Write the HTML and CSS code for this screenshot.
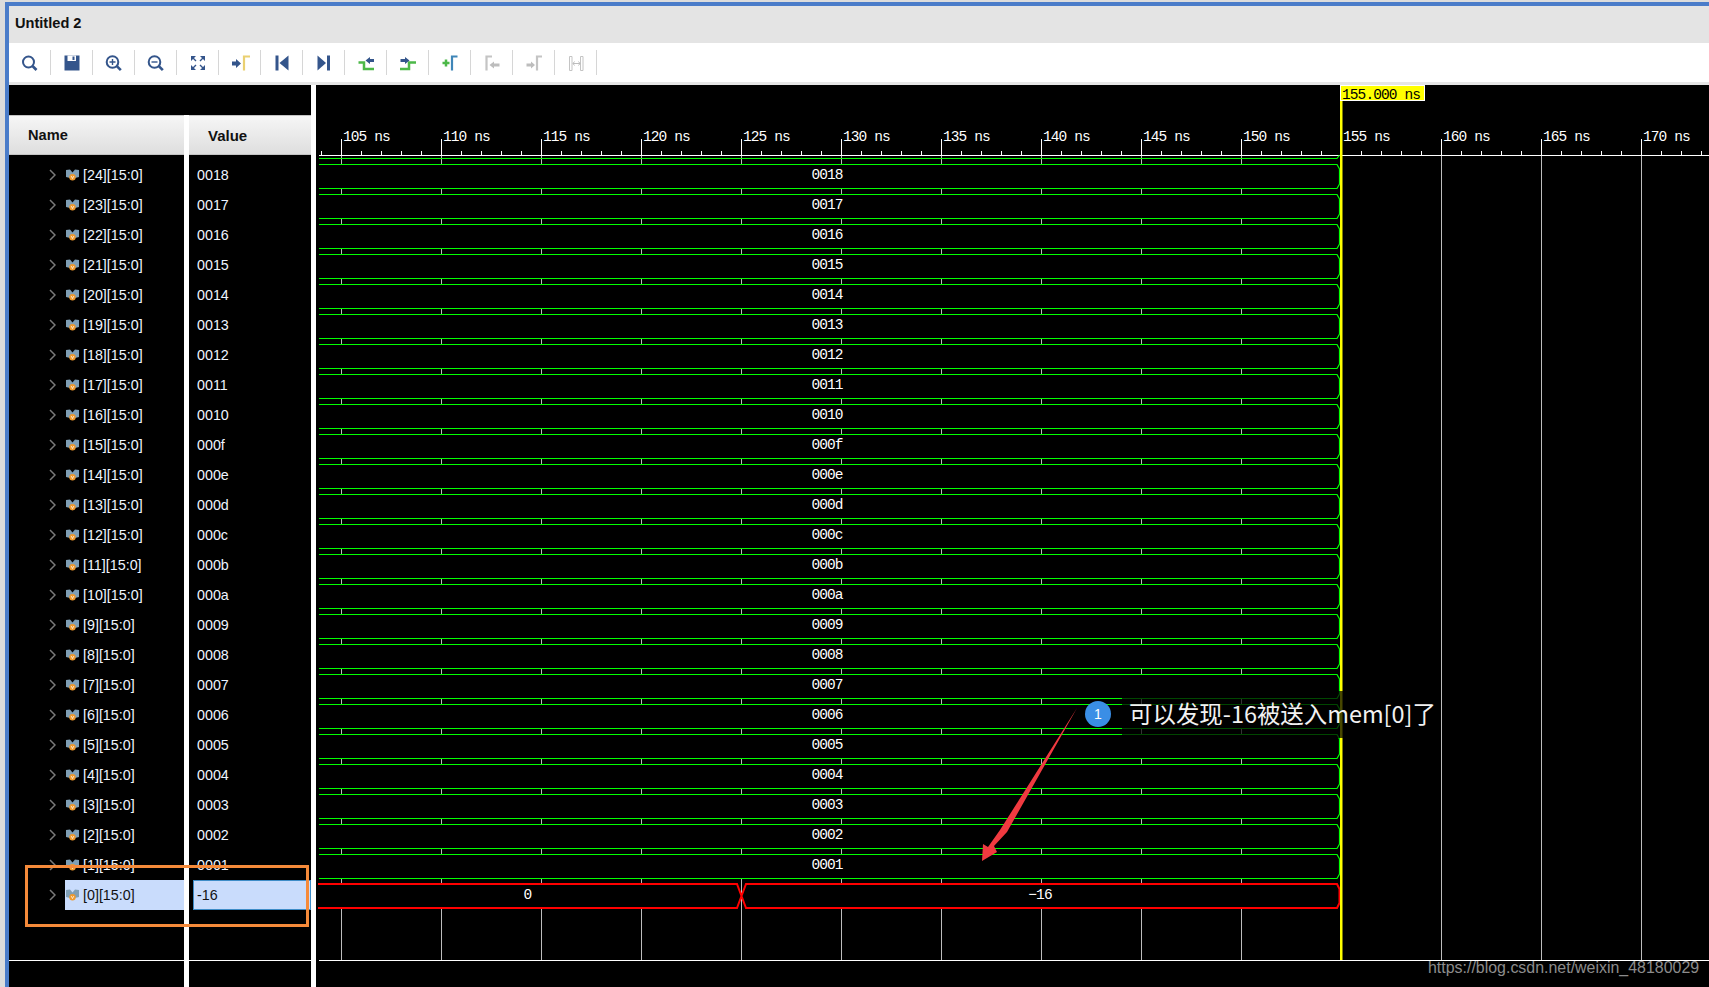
FILE: index.html
```html
<!DOCTYPE html>
<html lang="en">
<head>
<meta charset="utf-8">
<title>Untitled 2</title>
<link rel="stylesheet" href="styles.css">
</head>
<body>
<svg class="defs" width="0" height="0" aria-hidden="true">
  <symbol id="chev" viewBox="0 0 7 12"><polyline points="1,1 6,6 1,11" fill="none" stroke="#7a7a7a" stroke-width="1.5"/></symbol>
  <symbol id="var" viewBox="0 0 13 12">
    <path d="M0 1 L4 0.5 L6.5 3.5 L9 0.5 L13 1 V8 L9 9 H4 L0 8 Z" fill="#7f9fb5"/>
    <circle cx="6.5" cy="8.2" r="3.2" fill="#ef9a2e"/>
    <path d="M5.2 7 L6.5 9.6 L7.8 7" fill="none" stroke="#fff" stroke-width=".7"/>
  </symbol>
</svg>
<div class="window">
  <div class="titlebar">Untitled 2</div>
  <div class="toolbar">
    <div class="tool"><svg viewBox="0 0 22 22"><circle cx="9.5" cy="10" r="5.5" class="ln"/><path d="M13.5 14 L17.5 18" class="ln thick"/></svg></div>
    <div class="tool"><svg viewBox="0 0 22 22"><path d="M3.5 3.5 H18.5 V18.5 H3.5 Z" class="navy"/><rect x="6.5" y="3.5" width="8.5" height="5.5" fill="#fff"/><rect x="11.5" y="4.5" width="2" height="3.5" class="navy"/></svg></div>
    <div class="tool"><svg viewBox="0 0 22 22"><circle cx="9.5" cy="10" r="5.8" class="ln"/><path d="M13.8 14.2 L17.8 18.2" class="ln thick"/><path d="M6.5 10 H12.5 M9.5 7 V13" class="ln thin"/></svg></div>
    <div class="tool"><svg viewBox="0 0 22 22"><circle cx="9.5" cy="10" r="5.8" class="ln"/><path d="M13.8 14.2 L17.8 18.2" class="ln thick"/><path d="M6.5 10 H12.5" class="ln thin"/></svg></div>
    <div class="tool"><svg viewBox="0 0 22 22"><path d="M4 4 H9 L4 9 Z M18 4 V9 L13 4 Z M4 18 V13 L9 18 Z M18 18 H13 L18 13 Z" class="navy"/><path d="M6 6 L9 9 M16 6 L13 9 M6 16 L9 13 M16 16 L13 13" class="ln thin"/></svg></div>
    <div class="tool"><svg viewBox="0 0 22 22"><path d="M3 9.5 H7 V7 L12 11.5 L7 16 V13.5 H3 Z" class="navy"/><path d="M15 18.5 V4.5 H21" class="flag yellow"/></svg></div>
    <div class="tool"><svg viewBox="0 0 22 22"><rect x="4.5" y="3.5" width="3" height="15" class="navy"/><path d="M17.5 3.5 V18.5 L8.5 11 Z" class="navy"/></svg></div>
    <div class="tool"><svg viewBox="0 0 22 22"><rect x="14" y="3.5" width="3" height="15" class="navy"/><path d="M4.5 3.5 V18.5 L13 11 Z" class="navy"/></svg></div>
    <div class="tool"><svg viewBox="0 0 22 22"><path d="M3.5 10.5 H9 V17 H19" class="flag green"/><path d="M10.5 8.5 L15 5 V7 H19 V10 H15 V12 Z" class="navy"/></svg></div>
    <div class="tool"><svg viewBox="0 0 22 22"><path d="M3 17 H12 V10.5 H19" class="flag green"/><path d="M3.5 7 H8 V5 L12.5 8.5 L8 12 V10 H3.5 Z" class="navy"/></svg></div>
    <div class="tool"><svg viewBox="0 0 22 22"><path d="M3.5 11 H10.5 M7 7.5 V14.5" class="flag green"/><path d="M13 18.5 V4.5 H18.5" class="flag blue"/></svg></div>
    <div class="tool"><svg viewBox="0 0 22 22"><path d="M5.5 18.5 V4.5 H11" class="flag grey"/><path d="M8.5 13 L13 9.5 V11.5 H18.5 V14.5 H13 V16.5 Z" class="greyfill"/></svg></div>
    <div class="tool"><svg viewBox="0 0 22 22"><path d="M14 18.5 V4.5 H19" class="flag grey"/><path d="M3.5 11.5 H8 V9.5 L12 13 L8 16.5 V14.5 H3.5 Z" class="greyfill"/></svg></div>
    <div class="tool"><svg viewBox="0 0 22 22"><path d="M4.5 4.5 H7 V18.5 H4.5 Z M15.5 4.5 H18 V18.5 H15.5 Z" fill="none" stroke="#c4c4c4"/><path d="M8 11.5 H15 M9.5 9.5 L8 11.5 L9.5 13.5 M13.5 9.5 L15 11.5 L13.5 13.5" fill="none" stroke="#bdbdbd"/></svg></div>
  </div>
  <div class="main">
    <div class="left">
      <div class="left-top"></div>
      <div class="cols">
        <div class="col col-name">
          <div class="head">Name</div>
          <div class="list">
            <div class="row"><svg class="chev"><use href="#chev"/></svg><div class="item"><svg class="var"><use href="#var"/></svg>[24][15:0]</div></div>
            <div class="row"><svg class="chev"><use href="#chev"/></svg><div class="item"><svg class="var"><use href="#var"/></svg>[23][15:0]</div></div>
            <div class="row"><svg class="chev"><use href="#chev"/></svg><div class="item"><svg class="var"><use href="#var"/></svg>[22][15:0]</div></div>
            <div class="row"><svg class="chev"><use href="#chev"/></svg><div class="item"><svg class="var"><use href="#var"/></svg>[21][15:0]</div></div>
            <div class="row"><svg class="chev"><use href="#chev"/></svg><div class="item"><svg class="var"><use href="#var"/></svg>[20][15:0]</div></div>
            <div class="row"><svg class="chev"><use href="#chev"/></svg><div class="item"><svg class="var"><use href="#var"/></svg>[19][15:0]</div></div>
            <div class="row"><svg class="chev"><use href="#chev"/></svg><div class="item"><svg class="var"><use href="#var"/></svg>[18][15:0]</div></div>
            <div class="row"><svg class="chev"><use href="#chev"/></svg><div class="item"><svg class="var"><use href="#var"/></svg>[17][15:0]</div></div>
            <div class="row"><svg class="chev"><use href="#chev"/></svg><div class="item"><svg class="var"><use href="#var"/></svg>[16][15:0]</div></div>
            <div class="row"><svg class="chev"><use href="#chev"/></svg><div class="item"><svg class="var"><use href="#var"/></svg>[15][15:0]</div></div>
            <div class="row"><svg class="chev"><use href="#chev"/></svg><div class="item"><svg class="var"><use href="#var"/></svg>[14][15:0]</div></div>
            <div class="row"><svg class="chev"><use href="#chev"/></svg><div class="item"><svg class="var"><use href="#var"/></svg>[13][15:0]</div></div>
            <div class="row"><svg class="chev"><use href="#chev"/></svg><div class="item"><svg class="var"><use href="#var"/></svg>[12][15:0]</div></div>
            <div class="row"><svg class="chev"><use href="#chev"/></svg><div class="item"><svg class="var"><use href="#var"/></svg>[11][15:0]</div></div>
            <div class="row"><svg class="chev"><use href="#chev"/></svg><div class="item"><svg class="var"><use href="#var"/></svg>[10][15:0]</div></div>
            <div class="row"><svg class="chev"><use href="#chev"/></svg><div class="item"><svg class="var"><use href="#var"/></svg>[9][15:0]</div></div>
            <div class="row"><svg class="chev"><use href="#chev"/></svg><div class="item"><svg class="var"><use href="#var"/></svg>[8][15:0]</div></div>
            <div class="row"><svg class="chev"><use href="#chev"/></svg><div class="item"><svg class="var"><use href="#var"/></svg>[7][15:0]</div></div>
            <div class="row"><svg class="chev"><use href="#chev"/></svg><div class="item"><svg class="var"><use href="#var"/></svg>[6][15:0]</div></div>
            <div class="row"><svg class="chev"><use href="#chev"/></svg><div class="item"><svg class="var"><use href="#var"/></svg>[5][15:0]</div></div>
            <div class="row"><svg class="chev"><use href="#chev"/></svg><div class="item"><svg class="var"><use href="#var"/></svg>[4][15:0]</div></div>
            <div class="row"><svg class="chev"><use href="#chev"/></svg><div class="item"><svg class="var"><use href="#var"/></svg>[3][15:0]</div></div>
            <div class="row"><svg class="chev"><use href="#chev"/></svg><div class="item"><svg class="var"><use href="#var"/></svg>[2][15:0]</div></div>
            <div class="row"><svg class="chev"><use href="#chev"/></svg><div class="item"><svg class="var"><use href="#var"/></svg>[1][15:0]</div></div>
            <div class="row"><svg class="chev"><use href="#chev"/></svg><div class="item selected"><svg class="var"><use href="#var"/></svg>[0][15:0]</div></div>
          </div>
        </div>
        <div class="col col-value">
          <div class="head head-value">Value</div>
          <div class="list">
            <div class="vrow">0018</div><div class="vrow">0017</div><div class="vrow">0016</div><div class="vrow">0015</div><div class="vrow">0014</div>
            <div class="vrow">0013</div><div class="vrow">0012</div><div class="vrow">0011</div><div class="vrow">0010</div><div class="vrow">000f</div>
            <div class="vrow">000e</div><div class="vrow">000d</div><div class="vrow">000c</div><div class="vrow">000b</div><div class="vrow">000a</div>
            <div class="vrow">0009</div><div class="vrow">0008</div><div class="vrow">0007</div><div class="vrow">0006</div><div class="vrow">0005</div>
            <div class="vrow">0004</div><div class="vrow">0003</div><div class="vrow">0002</div><div class="vrow">0001</div>
            <div class="vrow vselected">-16</div>
          </div>
        </div>
      </div>
    </div>
    <div class="wave">
      <svg class="wavesvg" viewBox="316 85 1393 902" width="1393" height="902">
        <defs>
          <path id="sig" d="M319 164.5 H1337 L1339.5 169 V184 L1337 188.5 H319" fill="#000" stroke="#00ff00" stroke-width="1.2"/>
        </defs>
        <g class="grid">
          <path d="M341.5 155V960M441.5 155V960M541.5 155V960M641.5 155V960M741.5 155V960M841.5 155V960M941.5 155V960M1041.5 155V960M1141.5 155V960M1241.5 155V960M1441.5 155V960M1541.5 155V960M1641.5 155V960"/>
        </g>
        <g class="ruler">
          <path d="M341.5 139V155M441.5 139V155M541.5 139V155M641.5 139V155M741.5 139V155M841.5 139V155M941.5 139V155M1041.5 139V155M1141.5 139V155M1241.5 139V155M1441.5 139V155M1541.5 139V155M1641.5 139V155"/>
          <path d="M319 155.5 H1709"/>
          <path d="M321 153 H1709" class="minor"/>
          <path d="M319 960.5 H1709"/>
        </g>
        <g class="rtext">
          <text x="343" y="141">105 ns</text><text x="443" y="141">110 ns</text><text x="543" y="141">115 ns</text><text x="643" y="141">120 ns</text><text x="743" y="141">125 ns</text><text x="843" y="141">130 ns</text><text x="943" y="141">135 ns</text><text x="1043" y="141">140 ns</text><text x="1143" y="141">145 ns</text><text x="1243" y="141">150 ns</text><text x="1343" y="141">155 ns</text><text x="1443" y="141">160 ns</text><text x="1543" y="141">165 ns</text><text x="1643" y="141">170 ns</text>
        </g>
        <path d="M319 158.5 H1337 L1339.5 155" fill="none" stroke="#00ff00" stroke-width="1.2"/>
        <use href="#sig"/><use href="#sig" y="30"/><use href="#sig" y="60"/><use href="#sig" y="90"/><use href="#sig" y="120"/>
        <use href="#sig" y="150"/><use href="#sig" y="180"/><use href="#sig" y="210"/><use href="#sig" y="240"/><use href="#sig" y="270"/>
        <use href="#sig" y="300"/><use href="#sig" y="330"/><use href="#sig" y="360"/><use href="#sig" y="390"/><use href="#sig" y="420"/>
        <use href="#sig" y="450"/><use href="#sig" y="480"/><use href="#sig" y="510"/><use href="#sig" y="540"/><use href="#sig" y="570"/>
        <use href="#sig" y="600"/><use href="#sig" y="630"/><use href="#sig" y="660"/><use href="#sig" y="690"/>
        <path d="M318 884 H737 L746 908 H1337 L1339.5 903 V889 L1337 884 H746 L737 908 H318" fill="#000" stroke="#ff0000" stroke-width="2"/>
        <g class="wtext">
          <text x="827" y="179">0018</text><text x="827" y="209">0017</text><text x="827" y="239">0016</text><text x="827" y="269">0015</text><text x="827" y="299">0014</text>
          <text x="827" y="329">0013</text><text x="827" y="359">0012</text><text x="827" y="389">0011</text><text x="827" y="419">0010</text><text x="827" y="449">000f</text>
          <text x="827" y="479">000e</text><text x="827" y="509">000d</text><text x="827" y="539">000c</text><text x="827" y="569">000b</text><text x="827" y="599">000a</text>
          <text x="827" y="629">0009</text><text x="827" y="659">0008</text><text x="827" y="689">0007</text><text x="827" y="719">0006</text><text x="827" y="749">0005</text>
          <text x="827" y="779">0004</text><text x="827" y="809">0003</text><text x="827" y="839">0002</text><text x="827" y="869">0001</text>
          <text x="527.5" y="899">0</text><text x="1040" y="899">−16</text>
        </g>
        <rect x="1340" y="100" width="2.5" height="860" fill="#ffff00"/>
        <rect x="1340.5" y="85.5" width="84" height="15" fill="#ffff00" stroke="#fff"/>
        <text x="1342" y="99" class="ctext">155.000 ns</text>
        <polygon points="1077,708 1007,832 994,846 997,852 982,861 983,844 988,847 1000,830" fill="#f03a40"/>
      </svg>
    </div>
  </div>
</div>
<div class="note">可以发现-16被送入mem[0]了</div>
<div class="badge">1</div>
<div class="frame"></div>
<div class="mark">https://blog.csdn.net/weixin_48180029</div>
</body>
</html>
```
FILE: styles.css
```css
html, body { margin: 0; padding: 0; }
body {
  width: 1709px;
  height: 987px;
  overflow: hidden;
  background: #dcdcdc;
  font-family: "Liberation Sans", Arial, sans-serif;
  position: relative;
}
.defs { position: absolute; }
.window {
  margin: 2px 0 0 5px;
  height: 985px;
  border-top: 4px solid #4a7cc9;
  border-left: 4px solid #4a7cc9;
  box-sizing: border-box;
  display: flex;
  flex-direction: column;
  background: #fff;
}
.titlebar {
  height: 37px;
  flex: none;
  box-sizing: border-box;
  background: #e4e4e4;
  display: flex;
  align-items: center;
  padding: 0 0 3px 6px;
  font-weight: bold;
  font-size: 14.6px;
  color: #111;
}
.toolbar {
  height: 39px;
  flex: none;
  box-sizing: content-box;
  background: #fff;
  border-bottom: 3px solid #e6e6e6;
  display: flex;
  align-items: center;
}
.tool {
  width: 42px;
  height: 25px;
  box-sizing: border-box;
  border-right: 1px solid #d6d6d6;
  display: flex;
  align-items: center;
  justify-content: center;
  flex: none;
}
.tool svg { width: 22px; height: 22px; display: block; }
.ln { fill: none; stroke: #34558b; stroke-width: 2; }
.ln.thick { stroke-width: 2.6; }
.ln.thin { stroke-width: 1.4; }
.navy { fill: #34558b; }
.flag { fill: none; stroke-width: 2.2; }
.yellow { stroke: #ead071; }
.green { stroke: #4cb848; stroke-width: 2.5; }
.blue { stroke: #3f86b8; }
.grey { stroke: #c4c4c4; }
.greyfill { fill: #bdbdbd; }

.main { flex: 1; display: flex; min-height: 0; background: #000; }
.left { width: 302px; flex: none; display: flex; flex-direction: column; background: #000; }
.left-top { height: 30px; flex: none; }
.cols { flex: 1; display: flex; gap: 5px; background: #fff; min-height: 0; }
.col { background: #000; display: flex; flex-direction: column; }
.col-name { width: 175px; }
.col-value { width: 122px; }
.head {
  height: 40px;
  flex: none;
  box-sizing: border-box;
  background: linear-gradient(#f6f6f6, #dedede);
  border-top: 1px solid #c4c4c4;
  border-bottom: 1px solid #c4c4c4;
  display: flex;
  align-items: center;
  padding-left: 19px;
  font-size: 14.6px;
  font-weight: bold;
  color: #111;
}
.head-value { padding-left: 19px; font-size: 15px; }
.list {
  flex: none;
  padding-top: 5px;
  box-sizing: border-box;
  height: 806px;
  border-bottom: 1px solid #fff;
  font-size: 14.3px;
  color: #eef4ff;
}
.row { height: 30px; display: flex; align-items: center; padding-left: 40px; }
.chev { width: 7px; height: 12px; margin-right: 9px; flex: none; }
.item { flex: 1; height: 30px; display: flex; align-items: center; gap: 4px; padding-left: 1px; }
.var { width: 13px; height: 12px; flex: none; }
.selected { background: #c9dcfc; color: #111; }
.vrow { height: 30px; display: flex; align-items: center; padding-left: 8px; }
.vselected {
  margin-left: 4px;
  padding-left: 3px;
  box-sizing: border-box;
  border: 1px solid #3d8cc8;
  background: #c9dcfc;
  color: #111;
}

.wave { flex: 1; border-left: 5px solid #fff; min-width: 0; }
.wavesvg { display: block; }
.grid path { stroke: #bdbdbd; stroke-width: 1; fill: none; }
.ruler path { stroke: #fff; stroke-width: 1; fill: none; }
.ruler .minor { stroke-width: 4; stroke-dasharray: 1 19; }
.rtext text, .wtext text, .ctext {
  font-family: "Liberation Mono", monospace;
  font-size: 14.5px;
  letter-spacing: -.9px;
}
.rtext text { fill: #fff; }
.wtext text { fill: #fff; text-anchor: middle; }
.ctext { fill: #000; }

.note {
  position: absolute;
  left: 1122px;
  top: 691px;
  width: 319px;
  height: 47px;
  box-sizing: border-box;
  padding: 0 0 4px 7px;
  display: flex;
  align-items: center;
  background: rgba(0, 0, 0, .72);
  color: #f2f2f2;
  font-family: "Noto Sans CJK SC", "Liberation Sans", sans-serif;
  font-size: 23.45px;
  white-space: nowrap;
}
.badge {
  position: absolute;
  left: 1085px;
  top: 701px;
  width: 26px;
  height: 26px;
  border-radius: 50%;
  background: #3a8ee6;
  color: #fff;
  font-size: 14px;
  display: flex;
  align-items: center;
  justify-content: center;
}
.frame {
  position: absolute;
  left: 25px;
  top: 865px;
  width: 284px;
  height: 62px;
  box-sizing: border-box;
  border: 3px solid #f58a3a;
}
.mark {
  position: absolute;
  left: 1428px;
  top: 959px;
  font-size: 15.95px;
  color: #8c8c8c;
  white-space: nowrap;
}
```
